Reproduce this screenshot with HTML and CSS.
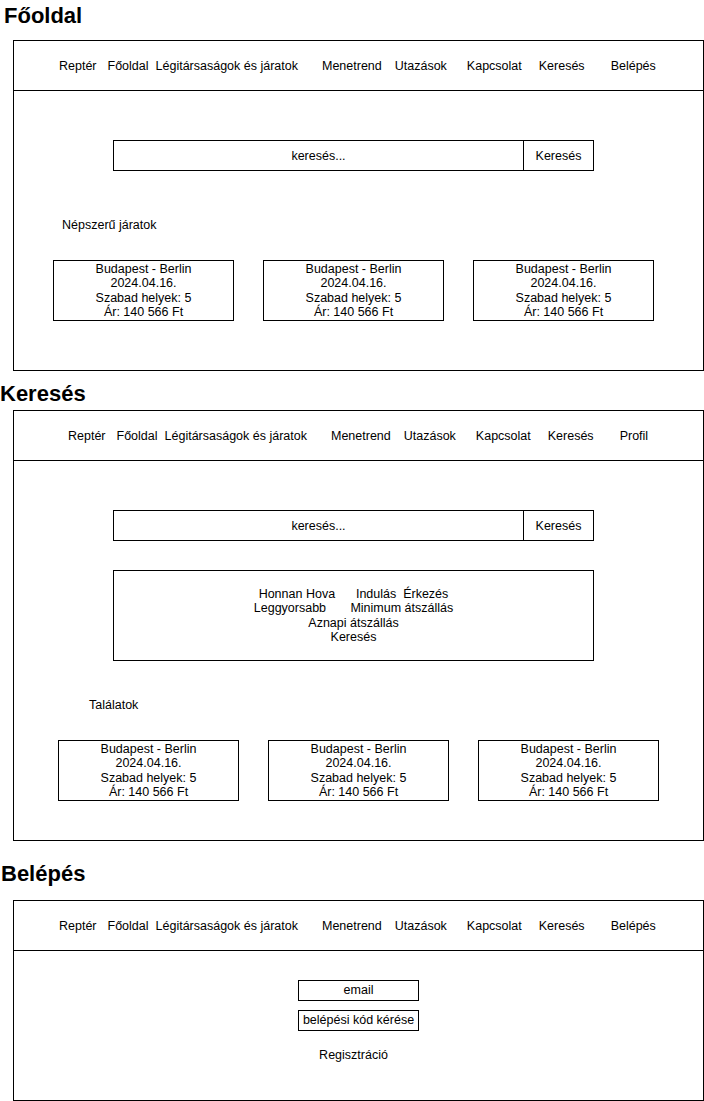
FILE: index.html
```html
<!DOCTYPE html>
<html lang="hu">
<head>
  <meta charset="UTF-8">
  <title>Reptér - drótváz</title>
  <link rel="stylesheet" href="styles.css">
</head>
<body>

<!-- Főoldal -->
<h2 class="pageTitle titleHome">Főoldal</h2>
<div class="frame frameHome">
  <div class="nav">
    <span>Reptér</span>
    <span>Főoldal</span>
    <span>Légitársaságok és járatok</span>
    <span>Menetrend</span>
    <span>Utazások</span>
    <span>Kapcsolat</span>
    <span>Keresés</span>
    <span>Belépés</span>
  </div>
  <div class="content">
    <div class="searchBar">
      <div class="searchField">keresés...</div>
      <div class="searchBtn">Keresés</div>
    </div>
    <div class="label labelPopular">Népszerű járatok</div>
    <div class="cards cardsHome">
      <div class="card">Budapest - Berlin<br>2024.04.16.<br>Szabad helyek: 5<br>Ár: 140 566 Ft</div>
      <div class="card">Budapest - Berlin<br>2024.04.16.<br>Szabad helyek: 5<br>Ár: 140 566 Ft</div>
      <div class="card">Budapest - Berlin<br>2024.04.16.<br>Szabad helyek: 5<br>Ár: 140 566 Ft</div>
    </div>
  </div>
</div>

<!-- Keresés -->
<h2 class="pageTitle titleSearch">Keresés</h2>
<div class="frame frameSearch">
  <div class="nav navShift">
    <span>Reptér</span>
    <span>Főoldal</span>
    <span>Légitársaságok és járatok</span>
    <span>Menetrend</span>
    <span>Utazások</span>
    <span>Kapcsolat</span>
    <span>Keresés</span>
    <span>Profil</span>
  </div>
  <div class="content">
    <div class="searchBar">
      <div class="searchField">keresés...</div>
      <div class="searchBtn">Keresés</div>
    </div>
    <div class="filters">Honnan Hova      Indulás  Érkezés
Leggyorsabb       Minimum átszállás
Aznapi átszállás
Keresés</div>
    <div class="label labelResults">Találatok</div>
    <div class="cards cardsResults">
      <div class="card">Budapest - Berlin<br>2024.04.16.<br>Szabad helyek: 5<br>Ár: 140 566 Ft</div>
      <div class="card">Budapest - Berlin<br>2024.04.16.<br>Szabad helyek: 5<br>Ár: 140 566 Ft</div>
      <div class="card">Budapest - Berlin<br>2024.04.16.<br>Szabad helyek: 5<br>Ár: 140 566 Ft</div>
    </div>
  </div>
</div>

<!-- Belépés -->
<h2 class="pageTitle titleLogin">Belépés</h2>
<div class="frame frameLogin">
  <div class="nav">
    <span>Reptér</span>
    <span>Főoldal</span>
    <span>Légitársaságok és járatok</span>
    <span>Menetrend</span>
    <span>Utazások</span>
    <span>Kapcsolat</span>
    <span>Keresés</span>
    <span>Belépés</span>
  </div>
  <div class="content loginBox">
    <div class="smallBox emailBox">email</div>
    <div class="smallBox codeBtn">belépési kód kérése</div>
    <div class="register">Regisztráció</div>
  </div>
</div>

</body>
</html>
```
FILE: styles.css
```css
* {
  box-sizing: border-box;
}
body {
  margin: 0;
  font-family: 'Liberation Sans', Arial, sans-serif;
  font-size: 12.5px;
  color: #000;
  background: #fff;
}

/* címek */
.pageTitle {
  margin: 0;
  font-size: 22px;
  line-height: 24px;
  font-weight: bold;
}
.titleHome {
  margin-top: 4px;
  margin-bottom: 12px;
  padding-left: 4px;
}
.titleSearch {
  margin-top: 11px;
  margin-bottom: 4px;
}
.titleLogin {
  margin-top: 21px;
  margin-bottom: 14px;
  padding-left: 1px;
}

/* keretek */
.frame {
  margin-left: 13px;
  width: 691px;
  border: 1px solid #000;
}
.frameHome { height: 331px; }
.frameSearch { height: 431px; }
.frameLogin { height: 201px; }

/* menü */
.nav {
  display: flex;
  align-items: center;
  height: 50px;
  padding-left: 45px;
  border-bottom: 1px solid #000;
  white-space: nowrap;
}
.navShift {
  padding-left: 54px;
}
.nav span:nth-child(2) { margin-left: 11px; }
.nav span:nth-child(3) { margin-left: 7px; }
.nav span:nth-child(4) { margin-left: 24px; }
.nav span:nth-child(5) { margin-left: 13px; }
.nav span:nth-child(6) { margin-left: 20px; }
.nav span:nth-child(7) { margin-left: 17px; }
.nav span:nth-child(8) { margin-left: 26px; }

/* keresősáv */
.searchBar {
  display: flex;
  margin-top: 49px;
  margin-left: 99px;
  height: 31px;
}
.searchField,
.searchBtn {
  display: flex;
  align-items: center;
  justify-content: center;
  border: 1px solid #000;
}
.searchField {
  width: 411px;
}
.searchBtn {
  width: 70px;
  border-left: 0;
}

.label {
  line-height: 14px;
}
.labelPopular {
  margin-top: 47px;
  margin-left: 48px;
}
.labelResults {
  margin-top: 37px;
  margin-left: 75px;
}

/* kártyák */
.cards {
  display: flex;
  gap: 29px;
  margin-top: 28px;
}
.cardsHome { margin-left: 39px; }
.cardsResults { margin-left: 44px; }
.card {
  display: flex;
  align-items: center;
  justify-content: center;
  width: 181px;
  height: 61px;
  border: 1px solid #000;
  text-align: center;
  line-height: 14.4px;
}

/* szűrők */
.filters {
  display: flex;
  align-items: center;
  justify-content: center;
  margin-top: 29px;
  margin-left: 99px;
  width: 481px;
  height: 91px;
  border: 1px solid #000;
  white-space: pre;
  text-align: center;
  line-height: 14.4px;
}

/* belépés */
.loginBox {
  display: flex;
  flex-direction: column;
  align-items: center;
}
.smallBox {
  width: 121px;
  height: 21px;
  border: 1px solid #000;
  text-align: center;
  line-height: 19px;
  white-space: nowrap;
}
.emailBox {
  margin-top: 29px;
}
.codeBtn {
  margin-top: 9px;
}
.register {
  margin-top: 17px;
  margin-right: 10px;
  line-height: 14px;
}
```
